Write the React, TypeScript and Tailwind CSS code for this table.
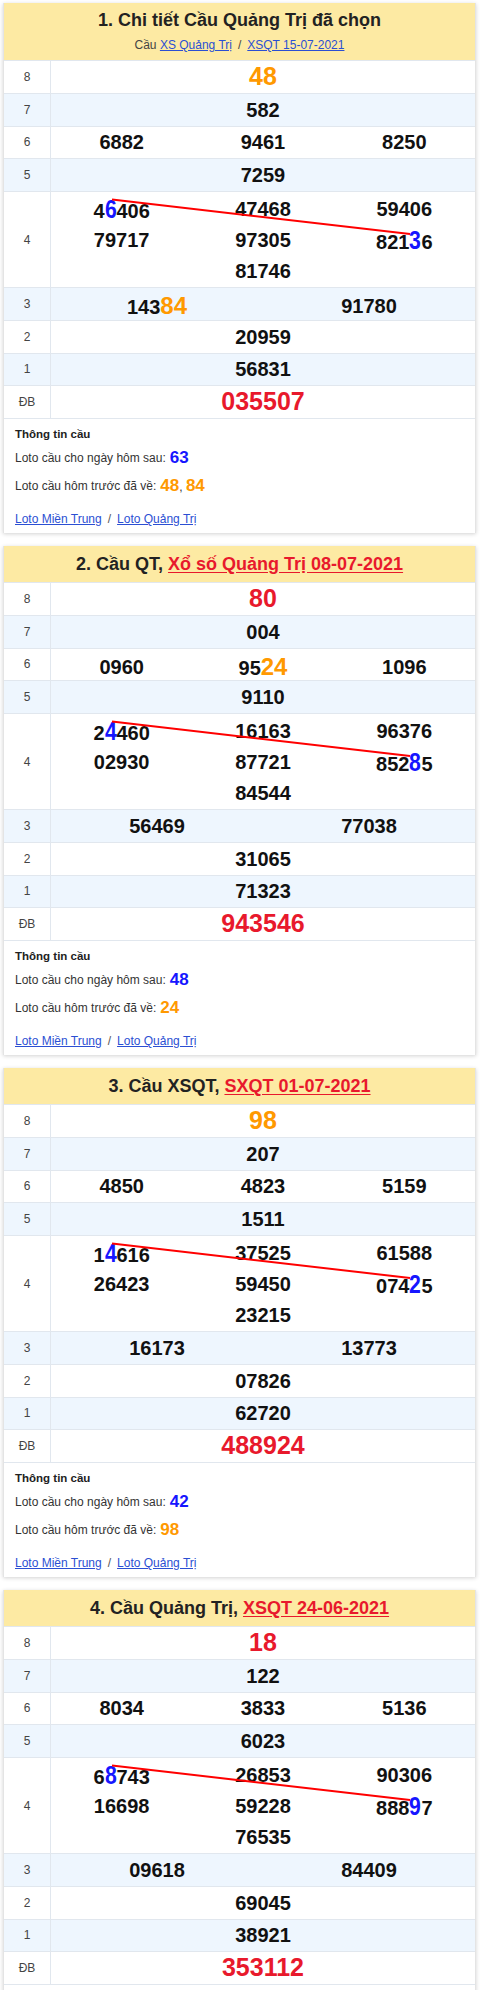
import React from "react";

type Cau = {
  no: number;
  title: string;
  link?: string;
  sub?: boolean;
  g8: string;
  g8hit?: boolean;
  g7: string;
  g6: string[];
  g5: string;
  g4: string[];
  g3: string[];
  g2: string;
  g1: string;
  db: string;
  next: string;
  prev: string[];
};

// [x] = blue bridge digit, {xx} = loto already hit (orange)
const cards: Cau[] = [
  {
    no: 1,
    title: "1. Chi tiết Cầu Quảng Trị đã chọn",
    sub: true,
    g8: "48",
    g8hit: true,
    g7: "582",
    g6: ["6882", "9461", "8250"],
    g5: "7259",
    g4: ["4[6]406", "47468", "59406", "79717", "97305", "821[3]6", "81746"],
    g3: ["143{84}", "91780"],
    g2: "20959",
    g1: "56831",
    db: "035507",
    next: "63",
    prev: ["48", "84"],
  },
  {
    no: 2,
    title: "2. Cầu QT, ",
    link: "Xổ số Quảng Trị 08-07-2021",
    g8: "80",
    g7: "004",
    g6: ["0960", "95{24}", "1096"],
    g5: "9110",
    g4: ["2[4]460", "16163", "96376", "02930", "87721", "852[8]5", "84544"],
    g3: ["56469", "77038"],
    g2: "31065",
    g1: "71323",
    db: "943546",
    next: "48",
    prev: ["24"],
  },
  {
    no: 3,
    title: "3. Cầu XSQT, ",
    link: "SXQT 01-07-2021",
    g8: "98",
    g8hit: true,
    g7: "207",
    g6: ["4850", "4823", "5159"],
    g5: "1511",
    g4: ["1[4]616", "37525", "61588", "26423", "59450", "074[2]5", "23215"],
    g3: ["16173", "13773"],
    g2: "07826",
    g1: "62720",
    db: "488924",
    next: "42",
    prev: ["98"],
  },
  {
    no: 4,
    title: "4. Cầu Quảng Trị, ",
    link: "XSQT 24-06-2021",
    g8: "18",
    g7: "122",
    g6: ["8034", "3833", "5136"],
    g5: "6023",
    g4: ["6[8]743", "26853", "90306", "16698", "59228", "888[9]7", "76535"],
    g3: ["09618", "84409"],
    g2: "69045",
    g1: "38921",
    db: "353112",
    next: "89",
    prev: [],
  },
];

const cols: Record<number, string> = {
  1: "grid-cols-1",
  2: "grid-cols-2",
  3: "grid-cols-3",
};

function Num({ v }: { v: string }) {
  const parts: React.ReactNode[] = [];
  const re = /\[(.+?)\]|\{(.+?)\}|([^[{]+)/g;
  let m: RegExpExecArray | null;
  let i = 0;
  while ((m = re.exec(v))) {
    if (m[1])
      parts.push(
        <span key={i++} className="inline-block -mx-[1px] scale-x-[0.85] text-[25px] text-[#1616ff]">
          {m[1]}
        </span>
      );
    else if (m[2])
      parts.push(
        <span key={i++} className="text-[24px] text-[#ff9900]">
          {m[2]}
        </span>
      );
    else parts.push(<span key={i++}>{m[3]}</span>);
  }
  return <>{parts}</>;
}

function Row({
  label,
  alt,
  tall,
  children,
}: {
  label: string;
  alt?: boolean;
  tall?: boolean;
  children: React.ReactNode;
}) {
  return (
    <div
      className={`flex border-b border-[#e1e7ee] ${tall ? "h-[96px]" : "h-[32.75px]"} ${
        alt ? "bg-[#eef6fe]" : "bg-white"
      }`}
    >
      <div className="flex w-[47px] shrink-0 items-center justify-center border-r border-[#e1e7ee] text-[12px] text-[#444]">
        {label}
      </div>
      <div className="relative flex-1">{children}</div>
    </div>
  );
}

function Cells({ items }: { items: string[] }) {
  return (
    <div className={`grid h-full items-center text-center ${cols[items.length]}`}>
      {items.map((n, i) => (
        <div key={i} className="text-[20px] font-bold text-[#111]">
          <Num v={n} />
        </div>
      ))}
    </div>
  );
}

function CauCard({ c }: { c: Cau }) {
  return (
    <div className="mb-[13px] border-x border-[#e4e4e4] bg-white shadow-[0_1px_4px_rgba(0,0,0,0.18)]">
      {/* header */}
      <div
        className={`border-b border-[#e1e7ee] bg-[#fdeaa3] text-center ${
          c.sub ? "pt-[5px] pb-[7px]" : "pt-[6px] pb-[6px]"
        }`}
      >
        <h2 className="text-[18px] leading-[24px] font-bold text-[#222]">
          {c.title}
          {c.link && <a className="text-[#e8192c] underline underline-offset-2">{c.link}</a>}
        </h2>
        {c.sub && (
          <p className="mt-[5px] text-[12px] leading-[16px] text-[#444]">
            Cầu <a className="text-[#2b4fd3] underline">XS Quảng Trị</a>
            <span className="mx-[6px]">/</span>
            <a className="text-[#2b4fd3] underline">XSQT 15-07-2021</a>
          </p>
        )}
      </div>

      {/* result table */}
      <Row label="8">
        <div className="flex h-full items-center justify-center">
          <span className={`text-[25px] font-bold ${c.g8hit ? "text-[#ff9900]" : "text-[#e8192c]"}`}>{c.g8}</span>
        </div>
      </Row>
      <Row label="7" alt>
        <Cells items={[c.g7]} />
      </Row>
      <Row label="6">
        <Cells items={c.g6} />
      </Row>
      <Row label="5" alt>
        <Cells items={[c.g5]} />
      </Row>
      <Row label="4" tall>
        <div className="flex flex-wrap justify-center pt-[2px]">
          {c.g4.map((n, i) => (
            <div key={i} className="h-[31px] w-1/3 text-center text-[20px] leading-[31px] font-bold text-[#111]">
              <Num v={n} />
            </div>
          ))}
        </div>
        <svg className="pointer-events-none absolute inset-0 h-full w-full" viewBox="0 0 424 95">
          <line x1="61" y1="7.5" x2="359" y2="42" stroke="#ff0000" strokeWidth="2" />
        </svg>
      </Row>
      <Row label="3" alt>
        <Cells items={c.g3} />
      </Row>
      <Row label="2">
        <Cells items={[c.g2]} />
      </Row>
      <Row label="1" alt>
        <Cells items={[c.g1]} />
      </Row>
      <Row label="ĐB">
        <div className="flex h-full items-center justify-center">
          <span className="text-[25px] font-bold text-[#e8192c]">{c.db}</span>
        </div>
      </Row>

      {/* bridge info */}
      <div className="px-[11px] pt-[7px] pb-[6px] text-[12px] text-[#333]">
        <div className="text-[11.5px] leading-[16px] font-bold text-[#222]">Thông tin cầu</div>
        <div className="mt-[4px] flex h-[24px] items-center">
          Loto cầu cho ngày hôm sau:
          <span className="ml-[4px] text-[17px] font-bold text-[#1616ff]">{c.next}</span>
        </div>
        <div className="mt-[4px] flex h-[24px] items-center">
          Loto cầu hôm trước đã về:
          <span className="ml-[4px]">
            {c.prev.map((p, i) => (
              <React.Fragment key={p}>
                {i > 0 && ", "}
                <span className="text-[17px] font-bold text-[#ff9900]">{p}</span>
              </React.Fragment>
            ))}
          </span>
        </div>
        <div className="mt-[13px] leading-[16px]">
          <a className="text-[#2b4fd3] underline">Loto Miền Trung</a>
          <span className="mx-[6px] text-[#555]">/</span>
          <a className="text-[#2b4fd3] underline">Loto Quảng Trị</a>
        </div>
      </div>
    </div>
  );
}

export default function App() {
  return (
    <div className="min-h-screen bg-white pt-[3px] pr-[4px] pl-[3px] font-[family-name:'Liberation_Sans',Arial,sans-serif]">
      {cards.map((c) => (
        <CauCard key={c.no} c={c} />
      ))}
    </div>
  );
}
